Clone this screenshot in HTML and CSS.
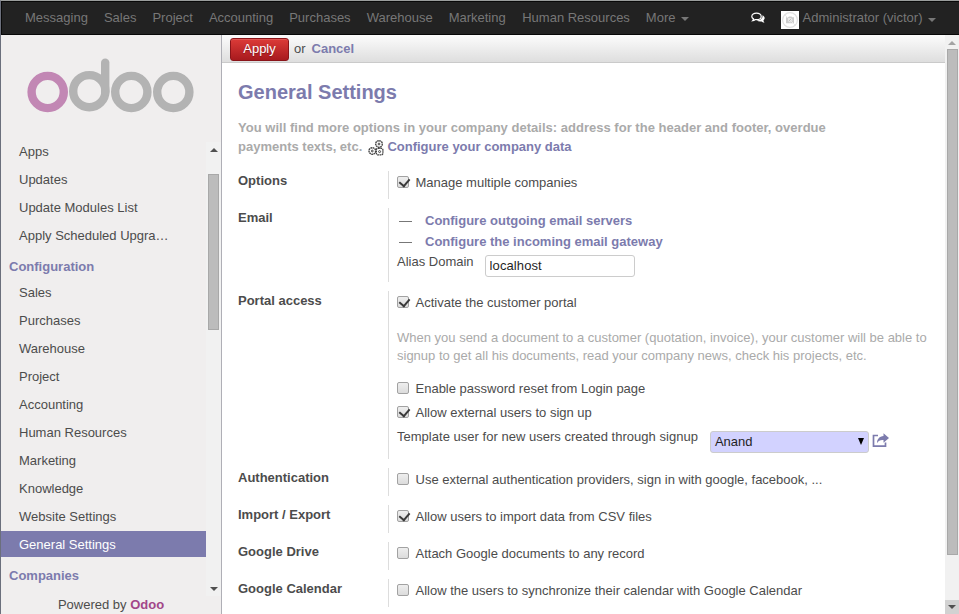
FILE: index.html
```html
<!DOCTYPE html>
<html lang="en">
<head>
<meta charset="utf-8">
<title>General Settings - Odoo</title>
<link rel="stylesheet" href="styles.css">
</head>
<body>
<div class="window">
  <nav class="navbar">
    <a>Messaging</a><a>Sales</a><a>Project</a><a>Accounting</a><a>Purchases</a><a>Warehouse</a><a>Marketing</a><a class="hr">Human Resources</a><a>More<i class="caret"></i></a>
    <div class="systray">
      <svg class="chat" width="14" height="12" viewBox="0 0 14 12"><path d="M11.300 3.200C13 3.900 13.900 5 13.600 6.500c-.2.800-.6 1.400-1.200 1.900.2.900.6 1.600 1.200 2.200-1.300 0-2.200-.4-3-1.200-1.900.3-3.700 0-4.900-1 3.700.1 6.500-2 5.600-5.200z" fill="#fff"/><path d="M5.500 1.200c2.600 0 4.700 1.300 4.700 3.200S8.100 7.600 5.500 7.600l-1.300-.1c-.8.700-1.500 1.100-2.500 1.200.5-.5.700-1 .8-1.800C1.400 6.300.8 5.400.8 4.400c0-1.900 2.100-3.200 4.700-3.200z" fill="#222" stroke="#fff" stroke-width="1.200"/></svg>
      <svg class="avatar" width="18" height="18" viewBox="0 0 18 18"><path fill="#fff" d="M0 0h18v18H0z"/><circle cx="9" cy="9" r="7.400" fill="none" stroke="#e0e0e0" stroke-width="1.200"/><path d="M5 6.300h2.200l.8-.8h2.500l.8.800H13v6H5z" fill="#ccc"/><circle cx="9.200" cy="9.200" r="1.700" fill="#bbb" stroke="#f2f2f2"/><path d="M4 4l10 10" stroke="#e8e8e8"/></svg>
      <span>Administrator (victor)</span><i class="caret low"></i>
    </div>
  </nav>
  <div class="body">
    <aside class="sidebar">
      <svg class="logo" width="168" height="56" viewBox="0 0 168 56" fill="none" stroke-width="8.400"><circle cx="20.700" cy="34" r="16.100" stroke="#c287b4"/><g stroke="#b3b3b3"><circle cx="62.300" cy="33.200" r="16.100"/><path d="M78.200 34V4.600" stroke-linecap="round"/><circle cx="104.300" cy="34" r="16.100"/><circle cx="146.300" cy="34" r="16.100"/></g></svg>
      <div class="menu-wrap">
        <div class="menu">
          <a>Apps</a><a>Updates</a><a>Update Modules List</a><a>Apply Scheduled Upgra…</a>
          <h4>Configuration</h4>
          <a>Sales</a><a>Purchases</a><a>Warehouse</a><a>Project</a><a>Accounting</a><a>Human Resources</a><a>Marketing</a><a>Knowledge</a><a>Website Settings</a><a class="active">General Settings</a>
          <h4>Companies</h4>
        </div>
        <div class="scroll side-scroll"><i class="up"></i><b></b><i class="down"></i></div>
      </div>
      <footer>Powered by <strong>Odoo</strong></footer>
    </aside>
    <main>
      <header class="toolbar"><button>Apply</button><span>or</span><a class="link">Cancel</a></header>
      <div class="sheet">
        <h1>General Settings</h1>
        <p class="intro">You will find more options in your company details: address for the header and footer, overdue<br><span class="tail">payments texts, etc. <svg class="gears" width="16" height="16" viewBox="0 0 16 16" fill="#fff" stroke="#444" stroke-width="1.400" stroke-dasharray="1.700 .5"><circle cx="11" cy="4" r="3.300"/><circle cx="4.300" cy="11" r="3.300"/><rect x="8.300" y="8.300" width="6.600" height="6.600" rx="1.800"/><g stroke-dasharray="none" stroke-width="1"><circle cx="11" cy="4" r=".9"/><circle cx="4.300" cy="11" r=".9"/><circle cx="11.600" cy="11.600" r="1"/></g></svg><a class="link">Configure your company data</a></span></p>
        <div class="settings">
          <section><h2>Options</h2><div class="fields"><label><i class="box on"></i>Manage multiple companies</label></div></section>
          <section><h2>Email</h2><div class="fields email">
            <div class="action"><i></i><a class="link">Configure outgoing email servers</a></div>
            <div class="action"><i></i><a class="link">Configure the incoming email gateway</a></div>
            <div class="pair"><span>Alias Domain</span><input value="localhost"></div>
          </div></section>
          <section><h2>Portal access</h2><div class="fields portal">
            <label><i class="box on"></i>Activate the customer portal</label>
            <p>When you send a document to a customer (quotation, invoice), your customer will be able to<br>signup to get all his documents, read your company news, check his projects, etc.</p>
            <label><i class="box"></i>Enable password reset from Login page</label>
            <label><i class="box on"></i>Allow external users to sign up</label>
            <div class="pair template"><span>Template user for new users created through signup</span><div class="select">Anand<i></i></div><svg class="share" width="18" height="15" viewBox="0 0 18 15"><path d="M6 2.500H1.500v10.700h12V9.500" fill="none" stroke="#7c7bad" stroke-width="1.700"/><path d="M11.500 .3l5.500 4.700-5.500 4.700V7C8.500 6.700 6.500 7.500 5 10.200c0-4.200 2.500-6.900 6.500-7.200z" fill="#7c7bad"/></svg></div>
          </div></section>
          <section><h2>Authentication</h2><div class="fields"><label><i class="box"></i>Use external authentication providers, sign in with google, facebook, ...</label></div></section>
          <section><h2>Import / Export</h2><div class="fields"><label><i class="box on"></i>Allow users to import data from CSV files</label></div></section>
          <section><h2>Google Drive</h2><div class="fields"><label><i class="box"></i>Attach Google documents to any record</label></div></section>
          <section><h2>Google Calendar</h2><div class="fields"><label><i class="box"></i>Allow the users to synchronize their calendar with Google Calendar</label></div></section>
        </div>
      </div>
    </main>
    <div class="scroll main-scroll"><i class="up"></i><b></b><div class="step"><i class="down"></i></div></div>
  </div>
</div>
</body>
</html>
```
FILE: styles.css
```css
* { box-sizing: border-box; }
body { margin: 0; font: 13px/18px "Liberation Sans", Arial, sans-serif; color: #4c4c4c; }
h1, h2, h4, p { margin: 0; }
.window { height: 614px; display: flex; flex-direction: column; overflow: hidden; border-left: 1px solid #6b6f7c; border-top: 1px solid #9a9d9c; }
.navbar { height: 34px; flex: none; display: flex; background: #222; border: 1px solid #080808; border-width: 1px 0 1px 1px; padding: 7px 23px 0 15px; color: #777; }
.navbar > a { padding: 0 8px; }
.navbar > .hr { padding-left: 8.500px; }
.caret { display: inline-block; border: 4px solid transparent; border-top-color: #777; border-bottom: 0; margin-left: 6px; vertical-align: 1px; }
.systray { margin-left: auto; display: flex; }
.chat { margin: 3px 16px 0 0; }
.avatar { margin: 2px 3.500px 0 0; }
.caret.low { margin: 9px 0 0 5.500px; height: 4px; }
.body { flex: 1; min-height: 0; display: flex; }
.sidebar { width: 221px; flex: none; background: #f0eeee; border-right: 1px solid #afafb6; display: flex; flex-direction: column; }
.logo { margin: 23px 0 0 26px; flex: none; }
.menu-wrap { margin-top: 24px; height: 458px; display: flex; flex: none; }
.menu { width: 205px; }
.menu a { display: block; height: 26px; line-height: 28px; margin-bottom: 2px; padding-left: 18px; }
.menu .active { background: #7c7bad; color: #fff; }
.menu h4 { font-size: 13px; color: #7c7bad; padding-left: 8px; height: 29px; line-height: 33px; }
.scroll { background: #f1f1f1; display: flex; flex-direction: column; align-items: center; }
.scroll i { flex: none; border: 4px solid transparent; }
.scroll .up { border-top: 0; border-bottom-color: #505050; }
.scroll .down { border-bottom: 0; border-top-color: #505050; }
.scroll b { background: #bcbcbc; border: 1px solid #a8a8a8; width: 11px; }
.side-scroll { width: 15px; margin-top: 4px; padding: 6px 0 0; }
.side-scroll b { height: 156px; margin: 22px 0 257px; }
footer { text-align: center; line-height: 17px; }
footer strong { color: #a24689; }
main { flex: 1; min-width: 0; background: #fff; }
.toolbar { height: 28px; display: flex; align-items: center; background: linear-gradient(#fcfcfc, #dedede); border-bottom: 1px solid #cacaca; padding: 1px 0 0 8px; }
.toolbar button { width: 59px; height: 23px; padding: 0 0 1px; border: 1px solid #8a1419; border-radius: 3px; font: 13px "Liberation Sans", Arial, sans-serif; color: #fff; text-shadow: 0 1px 1px rgba(0,0,0,.3); background: linear-gradient(#dc3b38, #a81a1e); box-shadow: inset 0 1px rgba(255,255,255,.15); }
.toolbar span { margin: 0 6px 0 5px; }
.toolbar span, .toolbar a { padding-bottom: 1px; }
.link { color: #7c7bad; font-weight: bold; }
.sheet { padding: 17px 0 0 16px; }
h1 { font-size: 20px; line-height: 24px; color: #7c7bad; }
.intro { margin-top: 14px; line-height: 19px; height: 53px; color: #aaa; font-weight: bold; white-space: nowrap; letter-spacing: .016px; }
.tail { letter-spacing: 0; }
.gears { margin: 0 3.500px 0 2px; vertical-align: -5px; }
.settings { display: flex; flex-direction: column; gap: 9px; }
section { display: flex; }
h2 { width: 150px; flex: none; font-size: 13px; line-height: 19px; }
.fields { border-left: 1px solid #ddd; padding-left: 8px; min-height: 28px; flex: 1; white-space: nowrap; }
.fields label { display: flex; height: 24px; line-height: 23px; }
.box { width: 12px; height: 12px; margin: 5px 6.500px 0 0; border: 1px solid #a2a2a2; border-radius: 2px; background: linear-gradient(#eee, #dcdcdc); }
.on::after { content: ""; display: block; width: 5px; height: 8px; margin: 0 0 0 3px; border: solid #3a3a3a; border-width: 0 2px 2px 0; transform: translateY(-.5px) rotate(40deg); }
.email { height: 74px; padding-top: 2px; }
.action { display: flex; height: 21px; line-height: 21px; }
.action i { width: 13px; height: 1px; background: #777; margin: 11px 13px 0 2px; }
.pair { display: flex; }
.pair > span { line-height: 20px; }
.pair input { width: 150px; height: 22px; margin: 3px 0 0 11px; border: 1px solid #ccc; border-radius: 3px; padding: 0 4px 1px; font: inherit; letter-spacing: .1px; color: #1f1f1f; }
.portal { height: 168px; }
.portal p { color: #aaa; margin: 14px 0 12px; }
.template > span { line-height: 23px; letter-spacing: .02px; }
.select { width: 159px; height: 22px; margin: 6px 0 0 12px; border: 1px solid #ccc; border-radius: 3px; background: #d2d2ff; color: #1f1f1f; padding: 0 4px; line-height: 20px; display: flex; justify-content: space-between; }
.select i { border: 3.500px solid transparent; border-top: 7px solid #000; border-bottom: 0; height: 7px; margin-top: 6px; }
.share { margin: 8px 0 0 3px; }
.main-scroll { width: 14px; padding-top: 6px; }
.main-scroll .up { border-bottom-color: #a3a3a3; }
.main-scroll b { height: 506px; margin: 4px 0 45px 1px; flex: none; }
.step { width: 14px; height: 14px; flex: none; background: #d2d2d2; display: flex; justify-content: center; align-items: center; }
```
